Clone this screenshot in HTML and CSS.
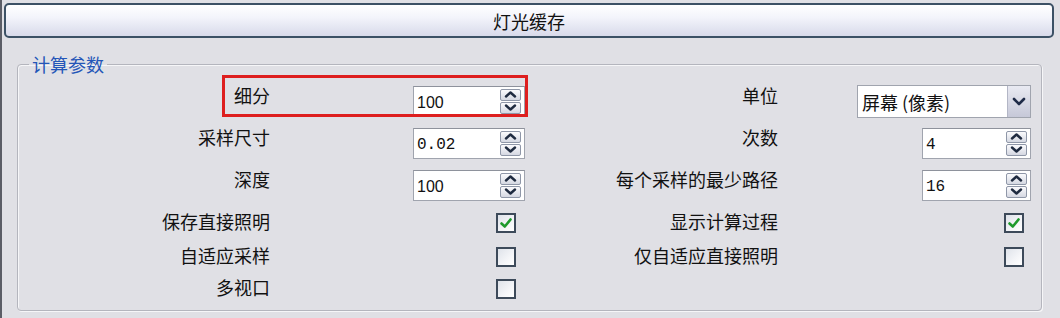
FILE: index.html
```html
<!DOCTYPE html>
<html lang="zh-CN">
<head>
<meta charset="utf-8">
<title>灯光缓存</title>
<link rel="stylesheet" href="styles.css">
</head>
<body>
<div class="panel">
  <div class="header">灯光缓存</div>
  <fieldset class="group">
    <legend>计算参数</legend>
    <div class="grid">
      <div class="highlight"></div>

      <div class="lbl s">细分</div>
      <div class="ctl"><div class="spinner left"><span class="val sans">100</span><span class="spin"><span class="sb"><svg viewBox="0 0 21 11" width="21" height="11"><path d="M6 7.5 L10.5 3.5 L15 7.5" /></svg></span><span class="sb"><svg viewBox="0 0 21 11" width="21" height="11"><path d="M6 3.5 L10.5 7.5 L15 3.5" /></svg></span></span></div></div>
      <div class="lbl s">单位</div>
      <div class="ctl"><div class="select"><span class="val">屏幕 (像素)</span><span class="dd"><svg viewBox="0 0 22 31" width="22" height="31"><path d="M6 13 L11 18 L16 13" /></svg></span></div></div>

      <div class="lbl s">采样尺寸</div>
      <div class="ctl"><div class="spinner left"><span class="val mono">0.02</span><span class="spin"><span class="sb"><svg viewBox="0 0 21 11" width="21" height="11"><path d="M6 7.5 L10.5 3.5 L15 7.5" /></svg></span><span class="sb"><svg viewBox="0 0 21 11" width="21" height="11"><path d="M6 3.5 L10.5 7.5 L15 3.5" /></svg></span></span></div></div>
      <div class="lbl s">次数</div>
      <div class="ctl"><div class="spinner right"><span class="val mono">4</span><span class="spin"><span class="sb"><svg viewBox="0 0 21 11" width="21" height="11"><path d="M6 7.5 L10.5 3.5 L15 7.5" /></svg></span><span class="sb"><svg viewBox="0 0 21 11" width="21" height="11"><path d="M6 3.5 L10.5 7.5 L15 3.5" /></svg></span></span></div></div>

      <div class="lbl s">深度</div>
      <div class="ctl"><div class="spinner left"><span class="val sans">100</span><span class="spin"><span class="sb"><svg viewBox="0 0 21 11" width="21" height="11"><path d="M6 7.5 L10.5 3.5 L15 7.5" /></svg></span><span class="sb"><svg viewBox="0 0 21 11" width="21" height="11"><path d="M6 3.5 L10.5 7.5 L15 3.5" /></svg></span></span></div></div>
      <div class="lbl s">每个采样的最少路径</div>
      <div class="ctl"><div class="spinner right"><span class="val mono">16</span><span class="spin"><span class="sb"><svg viewBox="0 0 21 11" width="21" height="11"><path d="M6 7.5 L10.5 3.5 L15 7.5" /></svg></span><span class="sb"><svg viewBox="0 0 21 11" width="21" height="11"><path d="M6 3.5 L10.5 7.5 L15 3.5" /></svg></span></span></div></div>

      <div class="lbl c">保存直接照明</div>
      <div class="ctl"><span class="cb cb-l checked"><svg viewBox="0 0 16 16" width="16" height="16"><path d="M3.5 8.5 L6.8 11.5 L12.5 4.5" /></svg></span></div>
      <div class="lbl c">显示计算过程</div>
      <div class="ctl"><span class="cb cb-r checked"><svg viewBox="0 0 16 16" width="16" height="16"><path d="M3.5 8.5 L6.8 11.5 L12.5 4.5" /></svg></span></div>

      <div class="lbl c">自适应采样</div>
      <div class="ctl"><span class="cb cb-l"></span></div>
      <div class="lbl c">仅自适应直接照明</div>
      <div class="ctl"><span class="cb cb-r"></span></div>

      <div class="lbl c">多视口</div>
      <div class="ctl"><span class="cb cb-l"></span></div>
    </div>
  </fieldset>
</div>
</body>
</html>
```

FILE: styles.css
```css
html, body {
  margin: 0;
  padding: 0;
}

body {
  width: 1060px;
  height: 318px;
  overflow: hidden;
  background: #e0e0e5;
  font-family: "Noto Sans CJK SC", "Noto Sans", sans-serif;
  font-size: 18px;
  color: #111111;
}

.panel {
  box-sizing: border-box;
  height: 318px;
  border-left: 2px solid #5b5d66;
  padding: 3px 6px 0 2px;
}

.header {
  box-sizing: border-box;
  height: 35px;
  border: 2px solid #3c5165;
  border-radius: 5px;
  background: linear-gradient(#ffffff 0%, #f3f4fb 40%, #d8daea 100%);
  display: flex;
  align-items: center;
  justify-content: center;
  line-height: 24px;
}

.group {
  margin: 14px 12px 0 13px;
  padding: 4px 0 6px 0;
  min-width: 0;
  border: 1px solid #b4b5bd;
  border-radius: 4px;
  box-shadow: inset 1px 1px 0 #f6f6f8, 1px 1px 0 #f6f6f8;
}

.group legend {
  margin-left: 11px;
  padding: 0 3px;
  line-height: 24px;
  color: #2456b8;
}

.grid {
  position: relative;
  display: grid;
  grid-template-columns: 252px 255px 253px 253px;
  grid-template-rows: 42px 42px 42px 34px 34px 30px;
  align-items: center;
}

.lbl {
  text-align: right;
  line-height: 24px;
  white-space: nowrap;
}

.lbl.s {
  margin-bottom: 12px;
}

.lbl.c {
  margin-bottom: 5px;
}

.ctl {
  display: flex;
  justify-content: flex-end;
  align-items: center;
}

.spinner {
  box-sizing: border-box;
  height: 31px;
  background: #ffffff;
  border: 1px solid #a0a4ae;
  border-top-color: #8e929c;
  display: flex;
  align-items: center;
  justify-content: space-between;
  padding: 0 3px 0 3px;
}

.spinner.left {
  width: 112px;
}

.spinner.right {
  width: 109px;
}

.val {
  line-height: 20px;
  padding-top: 3px;
}

.val.sans {
  font-family: "Liberation Sans", Arial, sans-serif;
  font-size: 16px;
}

.val.mono {
  font-family: "Liberation Mono", "Courier New", monospace;
  font-size: 16px;
}

.spin {
  display: flex;
  flex-direction: column;
  gap: 1px;
}

.sb {
  box-sizing: border-box;
  display: block;
  width: 21px;
  height: 12px;
  border: 1px solid #8f97a8;
  border-radius: 2px;
  background: linear-gradient(#fbfbfd, #d5d8e2);
  overflow: hidden;
}

.sb svg {
  display: block;
  margin: -0.5px 0 0 -1px;
}

.sb path {
  fill: none;
  stroke: #1f2b40;
  stroke-width: 2.4;
  stroke-linecap: round;
  stroke-linejoin: round;
}

.select {
  box-sizing: border-box;
  width: 174px;
  height: 33px;
  background: #ffffff;
  border: 1px solid #a0a4ae;
  display: flex;
  align-items: stretch;
  justify-content: space-between;
}

.select .val {
  padding: 3px 0 0 4px;
  line-height: 26px;
  white-space: pre;
}

.dd {
  box-sizing: border-box;
  width: 23px;
  border-left: 1px solid #b3b6c6;
  background: linear-gradient(#e9eaf2, #c6c8d8);
}

.dd svg {
  display: block;
}

.dd path {
  fill: none;
  stroke: #1f2b48;
  stroke-width: 2.6;
  stroke-linecap: round;
  stroke-linejoin: round;
}

.cb {
  box-sizing: border-box;
  width: 20px;
  height: 20px;
  border: 2px solid #3d4a5a;
  background: linear-gradient(135deg, #dfe3ea 0%, #f4f5f8 60%, #ffffff 100%);
  display: flex;
  align-items: center;
  justify-content: center;
}

.cb-l {
  margin-right: 9px;
}

.cb-r {
  margin-right: 7px;
}

.cb path {
  fill: none;
  stroke: #1e9a2c;
  stroke-width: 2.6;
  stroke-linecap: round;
  stroke-linejoin: round;
}

.highlight {
  position: absolute;
  left: 204px;
  top: -5px;
  width: 306px;
  height: 42px;
  box-sizing: border-box;
  border: 3px solid #de1f1f;
  pointer-events: none;
}
```
